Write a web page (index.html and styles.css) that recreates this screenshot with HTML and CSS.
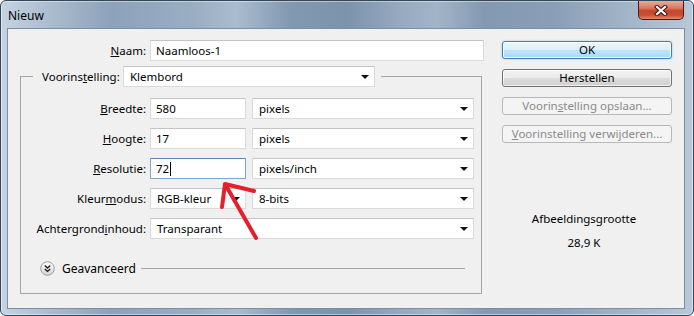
FILE: index.html
```html
<!DOCTYPE html>
<html lang="nl">
<head>
  <meta charset="UTF-8">
  <title>Nieuw</title>
  <link rel="stylesheet" href="styles.css">
</head>
<body>
<div class="window">
  <div class="titlebar">
    <span class="title">Nieuw</span>
    <button class="close">
      <svg width="14" height="11" viewBox="0 0 14 11">
        <path d="M3 2 L11 9 M11 2 L3 9" stroke="#3b1510" stroke-width="4.2" stroke-linecap="square" fill="none"/>
        <path d="M3 2 L11 9 M11 2 L3 9" stroke="#fff" stroke-width="2.2" stroke-linecap="square" fill="none"/>
      </svg>
    </button>
  </div>
  <div class="client">
    <div class="main">
      <div class="name-row">
        <label class="lbl name-lbl"><u>N</u>aam:</label>
        <div class="field name-field">Naamloos-1</div>
      </div>
      <fieldset class="group">
        <legend>
          <label class="lbl preset-lbl">Voorins<u>t</u>elling:</label>
          <div class="field select preset">Klembord<span class="arrow"></span></div>
        </legend>
        <div class="grid">
          <label class="lbl"><u>B</u>reedte:</label>
          <div class="field">580</div>
          <div class="field select unit">pixels<span class="arrow"></span></div>

          <label class="lbl"><u>H</u>oogte:</label>
          <div class="field">17</div>
          <div class="field select unit">pixels<span class="arrow"></span></div>

          <label class="lbl"><u>R</u>esolutie:</label>
          <div class="field focused">72<span class="caret"></span></div>
          <div class="field select unit">pixels/inch<span class="arrow"></span></div>

          <label class="lbl">Kleur<u>m</u>odus:</label>
          <div class="field select">RGB-kleur<span class="arrow"></span></div>
          <div class="field select unit">8-bits<span class="arrow"></span></div>

          <label class="lbl">Achtergrond<u>i</u>nhoud:</label>
          <div class="field select wide">Transparant<span class="arrow"></span></div>
        </div>
        <div class="advanced">
          <svg class="adv-icon" width="15" height="15" viewBox="0 0 15 15">
            <defs>
              <linearGradient id="adv" x1="0" y1="0" x2="0" y2="1">
                <stop offset="0" stop-color="#ffffff"/>
                <stop offset="1" stop-color="#d4d4d4"/>
              </linearGradient>
            </defs>
            <circle cx="7.5" cy="7.5" r="6.8" fill="url(#adv)" stroke="#9c9c9c"/>
            <path d="M4.8 4.6 L7.5 7 L10.2 4.6 M4.8 8 L7.5 10.4 L10.2 8" stroke="#1e1e1e" stroke-width="1.4" fill="none"/>
          </svg>
          <span class="adv-text">Geavanceerd</span>
          <span class="adv-line"></span>
        </div>
      </fieldset>
    </div>
    <div class="side">
      <button class="btn default">OK</button>
      <button class="btn">Herstellen</button>
      <button class="btn" disabled>Voorin<u>s</u>telling opslaan...</button>
      <button class="btn" disabled><u>V</u>oorinstelling verwijderen...</button>
      <div class="size">
        <div>Afbeeldingsgrootte</div>
        <div class="size-value">28,9 K</div>
      </div>
    </div>
  </div>
</div>
<svg class="annotation" width="694" height="316" viewBox="0 0 694 316">
  <path d="M225 184 L256 238 M225 184 L222 207 M225 184 L254 191" stroke="#e3202b" stroke-width="4" stroke-linecap="round" fill="none"/>
</svg>
</body>
</html>
```

FILE: styles.css
```css
* {
  box-sizing: border-box;
}
html, body {
  margin: 0;
}
body {
  position: relative;
  width: 694px;
  height: 316px;
  overflow: hidden;
  font-family: "Noto Sans", "Open Sans", sans-serif;
  font-size: 11.5px;
  color: #000;
  background: #fff;
}
.window {
  width: 694px;
  height: 316px;
  border: 1px solid #34465a;
  border-radius: 6px;
  background: linear-gradient(90deg, #c5d3e2 0%, #a8b9cc 8%, #8ca2ba 16%, #9aaec3 28%, #aabccf 34%, #8098b0 42%, #7c93ac 50%, #97aac0 58%, #a2b4c8 63%, #8399b1 70%, #8a9fb7 80%, #a1b3c7 90%, #b9c8d8 100%);
  box-shadow: inset 0 0 0 1px rgba(255,255,255,0.45);
  display: flex;
  flex-direction: column;
}
.titlebar {
  height: 27px;
  display: flex;
  justify-content: space-between;
  align-items: flex-start;
}
.title {
  padding: 6px 0 0 7px;
  font-size: 12px;
}
.close {
  width: 46px;
  height: 19px;
  margin-right: 9px;
  padding: 0;
  border: 1px solid #4b1a12;
  border-top: none;
  border-radius: 0 0 5px 5px;
  background: linear-gradient(#e8ad9b 0%, #d9775b 40%, #c4442b 55%, #cb5235 80%, #e28c6c 100%);
  display: flex;
  align-items: center;
  justify-content: center;
}
.client {
  flex: 1;
  margin: 0 8px 6px 6px;
  border: 1px solid #7a8fa6;
  background: #f0f0f0;
  display: flex;
}
.main {
  width: 478px;
  padding-top: 11px;
}
.lbl {
  line-height: 21px;
  text-align: right;
  white-space: nowrap;
}
.name-row {
  display: flex;
  height: 21px;
}
.name-lbl {
  width: 138px;
  margin-right: 4px;
}
.name-field {
  width: 334px;
}
.field {
  height: 21px;
  border: 1px solid #dadada;
  border-top-color: #c4c4c4;
  background: #fff;
  padding: 0 5px;
  display: flex;
  align-items: center;
  white-space: nowrap;
}
.field.focused {
  border-color: #7ea7cc;
  border-top-color: #5d88b3;
}
.caret {
  display: inline-block;
  width: 1px;
  height: 14px;
  margin-left: 1px;
  background: #000;
}
.select {
  justify-content: space-between;
  padding-left: 6px;
  padding-right: 5px;
}
.arrow {
  width: 0;
  height: 0;
  border-left: 4px solid transparent;
  border-right: 4px solid transparent;
  border-top: 4px solid #111;
}
.group {
  width: 462px;
  min-width: 0;
  margin: 5px 0 0 12px;
  padding: 0 7px 17px 12px;
  border: 1px solid #a5a5a5;
}
.group legend {
  padding: 0 6px 0 9px;
  display: flex;
  align-items: center;
}
.preset-lbl {
  width: 77px;
  margin-right: 4px;
}
.preset {
  width: 252px;
}
.grid {
  display: grid;
  grid-template-columns: 117px 96px 228px;
  grid-auto-rows: 21px;
  row-gap: 9px;
  margin-top: 11px;
}
.grid .lbl {
  padding-right: 4px;
}
.unit {
  margin-left: 6px;
}
.wide {
  grid-column: 2 / 4;
}
.advanced {
  display: flex;
  align-items: center;
  height: 16px;
  margin: 21px 9px 0 7px;
}
.adv-text {
  margin-left: 7px;
  font-size: 12px;
}
.adv-line {
  flex: 1;
  margin-left: 5px;
  border-top: 1px solid #a5a5a5;
}
.side {
  width: 170px;
  margin-left: 16px;
  padding-top: 12px;
  display: flex;
  flex-direction: column;
  gap: 10px;
}
.btn {
  height: 18px;
  padding: 0;
  font: inherit;
  line-height: 16px;
  color: #000;
  border: 1px solid #707070;
  border-radius: 3px;
  background: linear-gradient(#f2f2f2 0%, #ebebeb 50%, #dddddd 50%, #cfcfcf 100%);
  box-shadow: inset 0 0 0 1px rgba(255,255,255,0.7);
}
.btn.default {
  border-color: #3c7fb1;
  background: linear-gradient(#eaf6fd 0%, #d9f0fc 50%, #bee6fd 50%, #a7d9f5 100%);
  box-shadow: inset 0 0 0 1px #fff, 0 0 2px #7dc3ec;
}
.btn:disabled {
  border-color: #b5b9bc;
  background: #f4f4f4;
  color: #8a8a8a;
  box-shadow: none;
}
.size {
  margin-top: 58px;
  margin-right: 6px;
  text-align: center;
  line-height: 16px;
}
.size-value {
  margin-top: 8px;
}
.annotation {
  position: absolute;
  top: 0;
  left: 0;
  pointer-events: none;
}
```
